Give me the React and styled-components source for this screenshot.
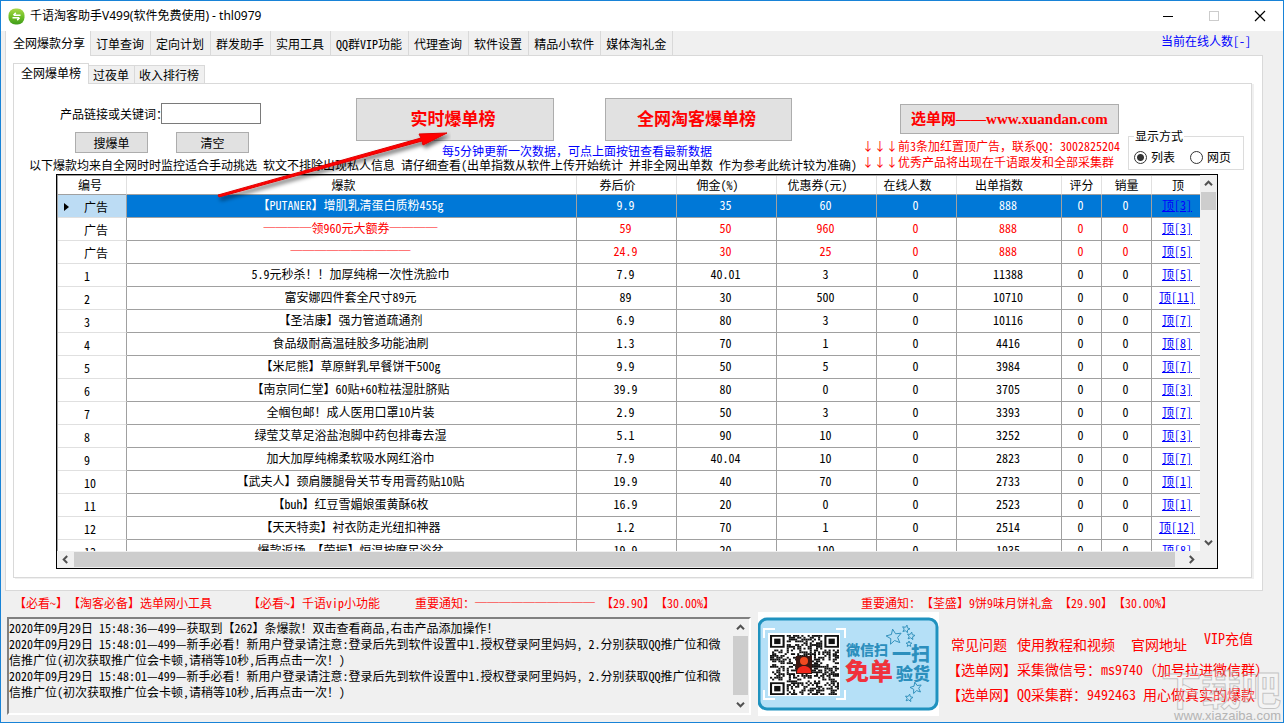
import React from "react";
import styled, { createGlobalStyle } from "styled-components";

const mainTabs = [
  "全网爆款分享",
  "订单查询",
  "定向计划",
  "群发助手",
  "实用工具",
  "QQ群VIP功能",
  "代理查询",
  "软件设置",
  "精品小软件",
  "媒体淘礼金",
];

const subTabs = ["全网爆单榜", "过夜单", "收入排行榜"];

const columns = [
  { title: "编号", width: 69, shift: 4 },
  { title: "爆款", shift: 16 },
  { title: "券后价", width: 100, shift: 18 },
  { title: "佣金(%)", width: 100, shift: 18 },
  { title: "优惠券(元)", width: 100, shift: 18 },
  { title: "在线人数", width: 80, shift: 18 },
  { title: "出单指数", width: 105, shift: 20 },
  { title: "评分", width: 40, shift: 0 },
  { title: "销量", width: 50, shift: 0 },
  { title: "顶", width: 53, shift: 0 },
];

const rows = [
  ["广告", "【PUTANER】增肌乳清蛋白质粉455g", "9.9", "35", "60", "888", "3"],
  ["广告", "────领960元大额券────", "59", "50", "960", "888", "3"],
  ["广告", "──────────", "24.9", "30", "25", "888", "5"],
  ["1", "5.9元秒杀！！加厚纯棉一次性洗脸巾", "7.9", "40.01", "3", "11388", "5"],
  ["2", "富安娜四件套全尺寸89元", "89", "30", "500", "10710", "11"],
  ["3", "【圣洁康】强力管道疏通剂", "6.9", "80", "3", "10116", "7"],
  ["4", "食品级耐高温硅胶多功能油刷", "1.3", "70", "1", "4416", "8"],
  ["5", "【米尼熊】草原鲜乳早餐饼干500g", "9.9", "50", "5", "3984", "7"],
  ["6", "【南京同仁堂】60贴+60粒祛湿肚脐贴", "39.9", "80", "0", "3705", "3"],
  ["7", "全帼包邮！成人医用口罩10片装", "2.9", "50", "3", "3393", "7"],
  ["8", "绿莹艾草足浴盐泡脚中药包排毒去湿", "5.1", "90", "10", "3252", "3"],
  ["9", "加大加厚纯棉柔软吸水网红浴巾", "7.9", "40.04", "10", "2823", "7"],
  ["10", "【武夫人】颈肩腰腿骨关节专用膏药贴10贴", "19.9", "40", "70", "2733", "1"],
  ["11", "【buh】红豆雪媚娘蛋黄酥6枚", "16.9", "20", "0", "2523", "1"],
  ["12", "【天天特卖】衬衣防走光纽扣神器", "1.2", "70", "1", "2514", "12"],
  ["13", "爆款返场-【荣振】恒温按摩足浴盆", "19.9", "20", "100", "1935", "8"],
];

const tip =
  "新手必看！新用户登录请注意:登录后先到软件设置中1.授权登录阿里妈妈, 2.分别获取QQ推广位和微信推广位(初次获取推广位会卡顿,请稍等10秒,后再点击一次！)";

const log = [
  "2020年09月29日 15:48:36—499—获取到【262】条爆款！双击查看商品，右击产品添加操作！",
  `2020年09月29日 15:48:01—499—${tip}`,
  `2020年09月29日 15:48:01—499—${tip}`,
].join("\n");

// Latin runs are set half-width, rules and Chinese punctuation stay full-width
function Mixed({ children }) {
  return children
    .split(/([─，：（）]+)/)
    .map((part, i) => (i % 2 ? <Full key={i}>{part}</Full> : part));
}

function Chevron({ dir }) {
  const angle = { up: 0, right: 90, down: 180, left: 270 }[dir];
  return (
    <svg width="9" height="9" viewBox="0 0 9 9" aria-hidden="true">
      <path
        d="M1 6.2 4.5 2.7 8 6.2"
        fill="none"
        stroke="#505050"
        strokeWidth="2"
        transform={`rotate(${angle} 4.5 4.5)`}
      />
    </svg>
  );
}

function Grid() {
  return (
    <GridBox>
      <GridMain>
        <GridView>
          <Table>
            <colgroup>
              {columns.map((c) => (
                <col key={c.title} width={c.width} />
              ))}
            </colgroup>
            <thead>
              <tr>
                {columns.map((c) => (
                  <HeadCell key={c.title} $shift={c.shift}>
                    {c.title}
                  </HeadCell>
                ))}
              </tr>
            </thead>
            <tbody>
              {rows.map(([no, name, price, rate, coupon, index, top], i) => (
                <Row key={i} $selected={i === 0} $ad={i < 3}>
                  <RowHead scope="row" $selected={i === 0}>
                    {no}
                  </RowHead>
                  <Cell>
                    <Mixed>{name}</Mixed>
                  </Cell>
                  <Cell>{price}</Cell>
                  <Cell>{rate}</Cell>
                  <Cell>{coupon}</Cell>
                  <Cell>0</Cell>
                  <Cell>{index}</Cell>
                  <Cell>0</Cell>
                  <Cell>0</Cell>
                  <Cell>
                    <a href="#top">顶[{top}]</a>
                  </Cell>
                </Row>
              ))}
            </tbody>
          </Table>
        </GridView>
        <VScroll>
          <ScrollButton aria-label="向上">
            <Chevron dir="up" />
          </ScrollButton>
          <Thumb $height={18} />
          <Spacer />
          <ScrollButton aria-label="向下">
            <Chevron dir="down" />
          </ScrollButton>
        </VScroll>
      </GridMain>
      <HScroll>
        <ScrollButton aria-label="向左">
          <Chevron dir="left" />
        </ScrollButton>
        <WideThumb />
        <ScrollButton aria-label="向右">
          <Chevron dir="right" />
        </ScrollButton>
      </HScroll>
    </GridBox>
  );
}

// 33x33 modules, finder squares are drawn separately on top
const N = 33;
const modules = [];
let seed = 20200929;
for (let y = 0; y < N; y++) {
  for (let x = 0; x < N; x++) {
    seed = (seed * 1103515245 + 12345) % 2147483648;
    const finder = (x < 8 && y < 8) || (x > 24 && y < 8) || (x < 8 && y > 24);
    const centre = x > 12 && x < 20 && y > 12 && y < 20;
    if (!finder && !centre && seed / 2147483648 > 0.47) modules.push([x, y]);
  }
}

function Star({ x, y, r, angle = 0 }) {
  const pts = [];
  for (let i = 0; i < 10; i++) {
    const a = ((i * 36 - 90 + angle) * Math.PI) / 180;
    const d = i % 2 ? r * 0.45 : r;
    pts.push(`${(x + d * Math.cos(a)).toFixed(1)},${(y + d * Math.sin(a)).toFixed(1)}`);
  }
  return <polygon points={pts.join(" ")} fill="#b5dff5" stroke="#3392bd" />;
}

function Finder({ x, y }) {
  return (
    <g transform={`translate(${x} ${y})`}>
      <rect width="7" height="7" fill="#111" />
      <rect x="1" y="1" width="5" height="5" fill="#fff" />
      <rect x="2" y="2" width="3" height="3" fill="#111" />
    </g>
  );
}

function Banner() {
  return (
    <BannerSvg viewBox="0 0 181 104" role="img" aria-label="微信扫一扫 免单验货">
      <rect width="181" height="104" fill="#fff" />
      <rect x="1" y="7" width="178" height="90" rx="8" fill="#b5e0f7" stroke="#1f92bf" strokeWidth="3" />
      <path
        d="M6 26V17H17M78 17H87V26M6 78V87H17M78 87H87V78"
        fill="none"
        stroke="#fff"
        strokeWidth="2"
      />
      <rect x="10" y="21" width="72" height="63" fill="#fff" />
      <svg x="12" y="23" width="69" height="60" viewBox="0 0 33 33" preserveAspectRatio="none">
        {modules.map(([x, y]) => (
          <rect key={`${x}-${y}`} x={x} y={y} width="1" height="1" fill="#111" />
        ))}
        <Finder x={0} y={0} />
        <Finder x={26} y={0} />
        <Finder x={0} y={26} />
      </svg>
      <rect x="38" y="44" width="16" height="18" fill="#3a1712" />
      <circle cx="46" cy="49" r="4" fill="#f04a20" />
      <path d="M39 61c0-5 3-7 7-7s7 2 7 7z" fill="#f0281c" />
      <Star x={136} y={25} r={8} angle={-10} />
      <Star x={148} y={17} r={4} angle={15} />
      <Star x={153} y={24} r={4} angle={10} />
      <Star x={151} y={32} r={3} />
      <Star x={158} y={76} r={6} angle={-12} />
      <Star x={151} y={86} r={4} angle={10} />
      <BannerText x="88" y="43" $size={14}>微信扫</BannerText>
      <BannerText x="134" y="49" $size={19}>一扫</BannerText>
      <BannerText x="87" y="68" $size={24} $red>免单</BannerText>
      <BannerText x="138" y="68" $size={17}>验货</BannerText>
    </BannerSvg>
  );
}

function Pointer() {
  return (
    <PointerSvg width="240" height="90" viewBox="0 0 240 90" aria-hidden="true">
      <defs>
        <filter id="soft" x="-10%" y="-20%" width="120%" height="150%">
          <feDropShadow dx="2" dy="3" stdDeviation="2" floodColor="#000" floodOpacity="0.6" />
        </filter>
      </defs>
      <path
        d="M7 75 210 18 208 14 236 13 212 25 211 21 8 77z"
        fill="#f00"
        stroke="#e00000"
        strokeWidth="1"
        strokeLinejoin="round"
        filter="url(#soft)"
      />
    </PointerSvg>
  );
}

export default function App() {
  return (
    <Window>
      <GlobalStyle />
      <TitleBar>
        <svg width="17" height="17" viewBox="0 0 17 17" aria-hidden="true">
          <defs>
            <linearGradient id="logo" x1="0" y1="0" x2="0" y2="1">
              <stop offset="0" stopColor="#a9d84a" />
              <stop offset="0.5" stopColor="#6fbf26" />
              <stop offset="1" stopColor="#3f9c1a" />
            </linearGradient>
          </defs>
          <rect x="0.5" y="0.5" width="16" height="16" rx="7" fill="url(#logo)" />
          <path
            d="M12.5 7.2H6M7.8 4.9 5.4 7.2M4.5 9.8H11M9.2 12.1l2.4-2.3"
            fill="none"
            stroke="#fff"
            strokeWidth="1.5"
          />
        </svg>
        <h1>千语淘客助手V499(软件免费使用) - thl0979</h1>
        <WindowButtons>
          <button aria-label="最小化">
            <svg width="12" height="12" viewBox="0 0 12 12">
              <path d="M1 6.5h10" stroke="#000" />
            </svg>
          </button>
          <button aria-label="最大化" disabled>
            <svg width="12" height="12" viewBox="0 0 12 12">
              <rect x="1.5" y="1.5" width="9" height="9" fill="none" stroke="#ccc" />
            </svg>
          </button>
          <button aria-label="关闭">
            <svg width="12" height="12" viewBox="0 0 12 12">
              <path d="M1 1 11 11M11 1 1 11" stroke="#000" strokeWidth="1.2" />
            </svg>
          </button>
        </WindowButtons>
      </TitleBar>

      <Body>
        <TabStrip>
          {mainTabs.map((t, i) => (
            <Tab key={t} $active={i === 0}>
              {t}
            </Tab>
          ))}
          <Online>当前在线人数[-]</Online>
        </TabStrip>
        <OuterPane>
          <SubStrip>
            {subTabs.map((t, i) => (
              <SubTab key={t} $active={i === 0}>
                {t}
              </SubTab>
            ))}
          </SubStrip>
          <InnerPane>
            <Toolbar>
              <div>
                <Controls>
                  <Search>
                    <SearchField>
                      <label htmlFor="keyword">产品链接或关键词：</label>
                      <input id="keyword" type="text" />
                    </SearchField>
                    <SearchButtons>
                      <Button>搜爆单</Button>
                      <Button>清空</Button>
                    </SearchButtons>
                  </Search>
                  <div>
                    <Ranks>
                      <RankButton $width={198}>实时爆单榜</RankButton>
                      <RankButton $width={187}>全网淘客爆单榜</RankButton>
                    </Ranks>
                    <Hint>
                      <Mixed>每5分钟更新一次数据，可点上面按钮查看最新数据</Mixed>
                    </Hint>
                  </div>
                </Controls>
                <Note>
                  以下爆款均来自全网时时监控适合手动挑选 软文不排除出现私人信息
                  请仔细查看(出单指数从软件上传开始统计 并非全网出单数 作为参考此统计较为准确)
                </Note>
              </div>
              <Promo>
                <SiteButton>选单网——www.xuandan.com</SiteButton>
                <p>
                  <Mixed>↓↓↓前3条加红置顶广告，联系QQ：3002825204</Mixed>
                </p>
                <p>↓↓↓优秀产品将出现在千语跟发和全部采集群</p>
              </Promo>
              <Mode>
                <legend>显示方式</legend>
                <label>
                  <input type="radio" name="mode" defaultChecked />
                  列表
                </label>
                <label>
                  <input type="radio" name="mode" />
                  网页
                </label>
              </Mode>
            </Toolbar>
            <Grid />
          </InnerPane>
        </OuterPane>

        <Notices>
          <a href="#tools">【必看~】【淘客必备】选单网小工具</a>
          <a href="#vip">【必看~】千语vip小功能</a>
          <a href="#notice">
            <Mixed>重要通知：────────── 【29.90】【30.00%】</Mixed>
          </a>
          <a href="#box">
            <Mixed>重要通知：【荃盛】9饼9味月饼礼盒 【29.90】【30.00%】</Mixed>
          </a>
        </Notices>

        <Footer>
          <LogBox>
            <textarea readOnly aria-label="日志" value={log} />
            <VScroll>
              <ScrollButton aria-label="向上">
                <Chevron dir="up" />
              </ScrollButton>
              <Thumb $height={59} />
              <Spacer />
              <ScrollButton aria-label="向下">
                <Chevron dir="down" />
              </ScrollButton>
            </VScroll>
          </LogBox>
          <Banner />
          <Contact>
            <Links>
              <a href="#faq">常见问题</a>
              <a href="#guide">使用教程和视频</a>
              <a href="#site">官网地址</a>
              <Vip href="#pay">VIP充值</Vip>
            </Links>
            <p>
              <Mixed>【选单网】采集微信号：ms9740（加号拉进微信群）</Mixed>
            </p>
            <p>
              <Mixed>【选单网】QQ采集群：9492463 用心做真实的爆款</Mixed>
            </p>
          </Contact>
        </Footer>
      </Body>
      <Pointer />
      <Watermark aria-hidden="true">
        <strong>下载吧</strong>
        <span>www.xiazaiba.com</span>
      </Watermark>
    </Window>
  );
}

const GlobalStyle = createGlobalStyle`
  * {
    box-sizing: border-box;
  }
  body {
    margin: 0;
    font-family: "Noto Sans CJK SC", sans-serif;
    font-size: 12px;
    line-height: 14px;
    font-feature-settings: "hwid";
    text-spacing-trim: space-all;
    color: #000;
  }
  h1, p {
    margin: 0;
    font-weight: normal;
  }
  a {
    text-decoration: none;
  }
  button, input, textarea {
    font: inherit;
    font-feature-settings: inherit;
    color: inherit;
    padding: 0;
    border-radius: 0;
  }
`;

const Full = styled.span`
  font-feature-settings: normal;
`;

const Window = styled.div`
  position: relative;
  display: flex;
  flex-direction: column;
  height: 100vh;
  border: 1px solid #1883d7;
  background: #f0f0f0;
  overflow: hidden;
`;

const TitleBar = styled.header`
  display: flex;
  align-items: center;
  flex: none;
  height: 30px;
  padding-left: 7px;
  gap: 5px;
  background: #fff;
  h1 {
    font-family: "Noto Sans", "Noto Sans CJK SC", sans-serif;
    font-size: 12px;
    font-feature-settings: normal;
  }
`;

const WindowButtons = styled.div`
  display: flex;
  margin-left: auto;
  button {
    display: flex;
    align-items: center;
    justify-content: center;
    width: 46px;
    height: 30px;
    border: none;
    background: none;
  }
`;

const Body = styled.main`
  display: flex;
  flex-direction: column;
  flex: 1;
  min-height: 0;
  padding: 0 4px 7px;
`;

const TabStrip = styled.nav`
  display: flex;
  flex: none;
  height: 24px;
  margin-right: 16px;
`;

const Tab = styled.button`
  height: ${(p) => (p.$active ? 25 : 24)}px;
  padding: ${(p) => (p.$active ? "0 5px 2px 7px" : "2px 6px 0 5px")};
  border: none;
  border-right: 1px solid #d9d9d9;
  border-left: ${(p) => (p.$active ? "1px solid #d9d9d9" : "none")};
  background: ${(p) => (p.$active ? "#fff" : "#f0f0f0")};
  z-index: ${(p) => (p.$active ? 1 : 0)};
  white-space: nowrap;
`;

const Online = styled.span`
  margin: 3px 12px 0 auto;
  color: #00f;
`;

const OuterPane = styled.section`
  display: flex;
  flex-direction: column;
  flex: 1;
  min-height: 0;
  margin-right: 16px;
  padding: 7px 10px 12px 7px;
  border: 1px solid #d9d9d9;
  background: #fff;
`;

const SubStrip = styled.nav`
  display: flex;
  align-items: flex-end;
  flex: none;
  height: 20px;
`;

const SubTab = styled.button`
  height: ${(p) => (p.$active ? 21 : 18)}px;
  margin-bottom: ${(p) => (p.$active ? -1 : 0)}px;
  padding: ${(p) => (p.$active ? "0 7px 2px" : "0 5px 0 4px")};
  border: solid #d9d9d9;
  border-width: ${(p) => (p.$active ? "1px 1px 0" : "1px 1px 0 0")};
  background: ${(p) => (p.$active ? "#fff" : "#f0f0f0")};
  z-index: ${(p) => (p.$active ? 1 : 0)};
`;

const InnerPane = styled.section`
  display: flex;
  flex-direction: column;
  flex: 1;
  min-height: 0;
  padding-bottom: 8px;
  border: 1px solid #d9d9d9;
  box-shadow: 2px 1px 0 #f0f0f0;
`;

const Toolbar = styled.div`
  display: flex;
  flex: none;
  height: 90px;
  padding: 14px 7px 0 15px;
`;

const Controls = styled.div`
  display: flex;
  height: 60px;
`;

const Search = styled.div`
  flex: 0 0 327px;
  padding: 5px 0 0 31px;
`;

const SearchField = styled.div`
  display: flex;
  align-items: center;
  input {
    width: 100px;
    height: 21px;
    margin-left: -7px;
    border: 1px solid #7a7a7a;
    background: #fff;
  }
`;

const SearchButtons = styled.div`
  display: flex;
  gap: 28px;
  padding: 8px 0 0 15px;
`;

const Button = styled.button`
  width: 73px;
  height: 21px;
  border: 1px solid #adadad;
  background: #e1e1e1;
`;

const Ranks = styled.div`
  display: flex;
  gap: 51px;
`;

const RankButton = styled(Button)`
  width: ${(p) => p.$width}px;
  height: 43px;
  padding: 0 4px 4px 0;
  font-size: 17px;
  font-weight: bold;
  color: #f00;
`;

const Hint = styled.p`
  margin: 3px 0 0 86px;
  color: #00f;
`;

const Note = styled.p`
  white-space: nowrap;
`;

const Promo = styled.div`
  flex: none;
  margin-left: auto;
  padding-top: 6px;
  color: #f00;
  p {
    line-height: 16px;
    white-space: nowrap;
  }
`;

const SiteButton = styled(Button)`
  display: block;
  width: 219px;
  height: 30px;
  margin: 0 0 4px 38px;
  font-family: "Liberation Serif", "Noto Sans CJK SC", serif;
  font-size: 15px;
  font-weight: bold;
  white-space: nowrap;
`;

const Mode = styled.fieldset`
  display: flex;
  flex: none;
  gap: 15px;
  width: 116px;
  height: 41px;
  margin: 31px 0 0 8px;
  padding: 6px 5px 0;
  border: 1px solid #dcdcdc;
  legend {
    padding: 0 1px;
  }
  label {
    display: flex;
    align-items: center;
    gap: 4px;
    height: 16px;
    white-space: nowrap;
  }
  input {
    appearance: none;
    width: 13px;
    height: 13px;
    margin: 0;
    border: 1px solid #333;
    border-radius: 50%;
    background: #fff;
  }
  input:checked {
    background: radial-gradient(circle, #333 3px, #fff 4px);
  }
`;

const GridBox = styled.div`
  display: flex;
  flex-direction: column;
  flex: 1;
  min-height: 0;
  margin: 0 33px 0 42px;
  border: 1px solid #000;
`;

const GridMain = styled.div`
  display: flex;
  flex: 1;
  min-height: 0;
`;

const GridView = styled.div`
  flex: 1;
  min-width: 0;
  overflow: hidden;
  border-top: 1px solid #a0a0a0;
  border-left: 1px solid #a0a0a0;
`;

const Table = styled.table`
  width: calc(100% + 5px);
  table-layout: fixed;
  border-collapse: separate;
  border-spacing: 0;
  text-align: center;
`;

const HeadCell = styled.th`
  height: 19px;
  padding: 0 ${(p) => p.$shift}px 0 0;
  border-right: 1px solid #e0e0e0;
  border-bottom: 1px solid #a0a0a0;
  font-weight: normal;
  white-space: nowrap;
`;

const Row = styled.tr`
  color: ${(p) => (p.$selected ? "#fff" : p.$ad ? "#f00" : "#000")};
  background: ${(p) => (p.$selected ? "#0078d7" : "#fff")};
`;

const Cell = styled.td`
  height: 23px;
  padding: 0 2px 2px 0;
  border-right: 1px solid #a0a0a0;
  border-bottom: 1px solid #a0a0a0;
  white-space: nowrap;
  a {
    color: #00f;
    text-decoration: underline;
  }
`;

const RowHead = styled.th`
  position: relative;
  height: 23px;
  padding: 1px 0 0 26px;
  border-right: 1px solid #a0a0a0;
  border-bottom: 1px solid #e0e0e0;
  font-weight: normal;
  text-align: left;
  color: #000;
  background: ${(p) => (p.$selected ? "#bcdcf4" : "#fff")};
  &::before {
    content: "";
    display: ${(p) => (p.$selected ? "block" : "none")};
    position: absolute;
    left: 6px;
    top: 8px;
    border: 4px solid transparent;
    border-left: 5px solid #000;
    border-right: none;
  }
`;

const VScroll = styled.div`
  display: flex;
  flex-direction: column;
  flex: none;
  width: 17px;
  background: #f0f0f0;
`;

const HScroll = styled.div`
  display: flex;
  flex: none;
  height: 17px;
  padding-right: 17px;
  background: #f0f0f0;
`;

const ScrollButton = styled.button`
  display: flex;
  align-items: center;
  justify-content: center;
  flex: none;
  width: 17px;
  height: 17px;
  border: none;
  background: #f0f0f0;
`;

const Thumb = styled.div`
  flex: none;
  width: 15px;
  height: ${(p) => p.$height}px;
  margin-left: 1px;
  background: #cdcdcd;
`;

const WideThumb = styled.div`
  flex: 1;
  height: 15px;
  margin: 1px 8px 0 0;
  background: #cdcdcd;
`;

const Spacer = styled.div`
  flex: 1;
`;

const Notices = styled.nav`
  display: flex;
  flex: none;
  height: 26px;
  padding: 5px 0 0 9px;
  white-space: nowrap;
  a {
    color: #f00;
  }
  a:nth-child(2) {
    margin-left: 36px;
  }
  a:nth-child(3) {
    margin-left: 35px;
  }
  a:nth-child(4) {
    margin-left: 146px;
  }
`;

const Footer = styled.footer`
  display: flex;
  flex: none;
  height: 98px;
  padding-left: 2px;
`;

const LogBox = styled.div`
  display: flex;
  flex: 1;
  min-width: 0;
  border: 2px solid;
  border-color: #808080 #fff #fff #808080;
  textarea {
    flex: 1;
    min-width: 0;
    padding: 1px 2px 0 0;
    border: none;
    outline: none;
    resize: none;
    overflow: hidden;
    line-height: 16px;
    background: #f0f0f0;
  }
`;

const BannerSvg = styled.svg`
  flex: none;
  width: 181px;
  height: 104px;
  margin: -5px 0 0 7px;
`;

const BannerText = styled.text`
  font-size: ${(p) => p.$size}px;
  font-weight: 900;
  fill: ${(p) => (p.$red ? "#f0323c" : "#2c8fbd")};
`;

const Contact = styled.div`
  flex: none;
  width: 340px;
  padding: 14px 0 0 8px;
  font-size: 14px;
  color: #f00;
  white-space: nowrap;
  p {
    line-height: 25px;
  }
`;

const Links = styled.div`
  display: flex;
  padding-left: 4px;
  line-height: 26px;
  a {
    color: #f00;
    margin-right: 10px;
  }
  a:nth-child(2) {
    margin-right: 16px;
  }
  a:nth-child(3) {
    margin-right: 17px;
  }
`;

const Vip = styled.a`
  line-height: 14px;
`;

const PointerSvg = styled.svg`
  position: absolute;
  left: 210px;
  top: 119px;
  pointer-events: none;
`;

const Watermark = styled.div`
  position: absolute;
  right: 2px;
  bottom: 0;
  display: flex;
  flex-direction: column;
  align-items: flex-end;
  pointer-events: none;
  strong {
    font-size: 40px;
    line-height: 44px;
    color: rgba(255, 255, 255, 0.3);
    -webkit-text-stroke: 1px rgba(150, 150, 150, 0.5);
  }
  span {
    font-family: "Liberation Sans", Arial, sans-serif;
    font-size: 13px;
    line-height: 12px;
    color: #b4b4b4;
  }
`;
